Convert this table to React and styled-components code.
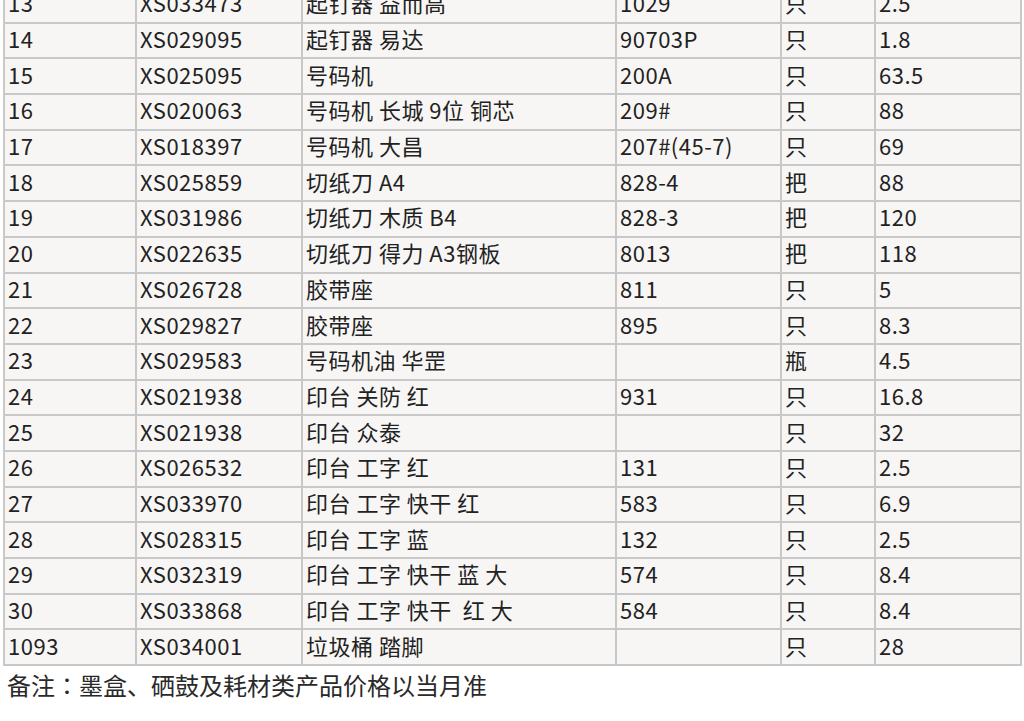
import React from "react";
import styled, { createGlobalStyle } from "styled-components";

const rows = [
    ["13", "XS033473", "起钉器 益而高", "1029", "只", "2.5"],
    ["14", "XS029095", "起钉器 易达", "90703P", "只", "1.8"],
    ["15", "XS025095", "号码机", "200A", "只", "63.5"],
    ["16", "XS020063", "号码机 长城 9位 铜芯", "209#", "只", "88"],
    ["17", "XS018397", "号码机 大昌", "207#(45-7)", "只", "69"],
    ["18", "XS025859", "切纸刀 A4", "828-4", "把", "88"],
    ["19", "XS031986", "切纸刀 木质 B4", "828-3", "把", "120"],
    ["20", "XS022635", "切纸刀 得力 A3钢板", "8013", "把", "118"],
    ["21", "XS026728", "胶带座", "811", "只", "5"],
    ["22", "XS029827", "胶带座", "895", "只", "8.3"],
    ["23", "XS029583", "号码机油 华罡", "", "瓶", "4.5"],
    ["24", "XS021938", "印台 关防 红", "931", "只", "16.8"],
    ["25", "XS021938", "印台 众泰", "", "只", "32"],
    ["26", "XS026532", "印台 工字 红", "131", "只", "2.5"],
    ["27", "XS033970", "印台 工字 快干 红", "583", "只", "6.9"],
    ["28", "XS028315", "印台 工字 蓝", "132", "只", "2.5"],
    ["29", "XS032319", "印台 工字 快干 蓝 大", "574", "只", "8.4"],
    ["30", "XS033868", "印台 工字 快干  红 大", "584", "只", "8.4"],
    ["1093", "XS034001", "垃圾桶 踏脚", "", "只", "28"],
];

const widths = [132, 166, 314, 165, 94, 146];

const App = () => {
    return (
        <Page>
            <GlobalStyle />
            <Table>
                <colgroup>
                    {widths.map((w, i) => (
                        <col key={i} style={{ width: w }} />
                    ))}
                </colgroup>
                <tbody>
                    {rows.map((r, i) => (
                        <Row key={i}>
                            {r.map((c, j) => (
                                <Cell key={j}>{c}</Cell>
                            ))}
                        </Row>
                    ))}
                </tbody>
            </Table>
            <Note>
                备注<Colon>：</Colon>墨盒、硒鼓及耗材类产品价格以当月准
            </Note>
        </Page>
    );
};

//#region Styles

const GlobalStyle = createGlobalStyle`
    html, body {
        margin: 0;
        padding: 0;
        background: #ffffff;
        overflow: hidden;
    }
`;

const Page = styled.div`
    width: 1024px;
    height: 721px;
    overflow: hidden;
    font-family: "Noto Sans CJK SC", "Noto Sans", sans-serif;
    color: #222222;
`;

const Table = styled.table`
    border-collapse: collapse;
    table-layout: fixed;
    width: 1019px;
    margin: -14px 0 0 3px;
    background: #f7f6f5;
    border: 2px solid #c8c8c8;
`;

const Row = styled.tr`
    height: 35.7px;
`;

const Cell = styled.td`
    border: 2px solid #c8c8c8;
    padding: 0 0 5px 3px;
    font-size: 22px;
    line-height: 26px;
    letter-spacing: 0.5px;
    white-space: pre;
    overflow: hidden;
    vertical-align: middle;
`;

const Note = styled.div`
    padding: 4px 0 0 7px;
    font-size: 24px;
    line-height: 30px;
    color: #2a2a2a;
`;

const Colon = styled.span`
    font-family: "Noto Sans CJK TC", "Noto Sans CJK SC", sans-serif;
`;

//#endregion

export default App;
